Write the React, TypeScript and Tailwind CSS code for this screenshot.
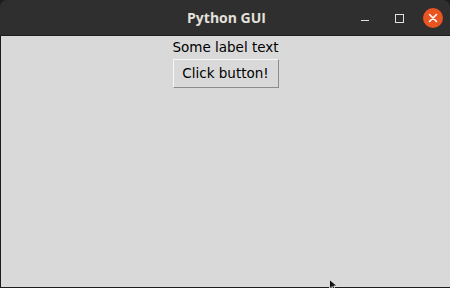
import React from "react";

export default function App() {
  return (
    <div className="w-[450px] h-[288px] flex flex-col bg-[#1c1c1c] overflow-hidden relative">
      <div className="h-[36px] shrink-0 rounded-t-[7px] bg-[#2f2f2f] flex items-center relative border-b border-[#1d1d1d]">
        <div className="flex-1 text-center text-[14px] font-bold text-[#e4e1dc] pl-[3px]" style={{ fontFamily: '"Open Sans", "DejaVu Sans", sans-serif' }}>
          Python GUI
        </div>
        <div className="absolute right-0 top-0 h-[36px] flex items-center gap-0">
          <div className="w-[34px] h-[36px] flex items-center justify-center">
            <div className="w-[8px] h-[1px] bg-[#e4e1dc] mt-[4px]" />
          </div>
          <div className="w-[34px] h-[36px] flex items-center justify-center">
            <div className="w-[9px] h-[9px] border border-[#e4e1dc]" />
          </div>
          <div className="w-[34px] h-[36px] flex items-center justify-center">
            <div className="w-[20px] h-[20px] rounded-full bg-[#e95420] flex items-center justify-center">
              <svg width="10" height="10" viewBox="0 0 10 10">
                <path d="M1.5 1.5 L8.5 8.5 M8.5 1.5 L1.5 8.5" stroke="#ffffff" strokeWidth="1.6" strokeLinecap="round" />
              </svg>
            </div>
          </div>
        </div>
      </div>
      <div className="flex-1 ml-[1px] mb-[1px] bg-[#d9d9d9] flex flex-col items-center pt-[1px]" style={{ fontFamily: '"DejaVu Sans", sans-serif' }}>
        <div className="h-[22px] flex items-center text-[13.5px] text-black leading-none">Some label text</div>
        <div className="w-[106px] h-[29px] border border-t-[#f6f6f6] border-l-[#f6f6f6] border-r-[#8c8c8c] border-b-[#8c8c8c] bg-[#d9d9d9] flex items-center justify-center text-[13.5px] text-black leading-none">
          Click button!
        </div>
      </div>
      <svg className="absolute left-[329px] top-[279px]" width="12" height="12" viewBox="0 0 12 12">
        <path d="M0.5 0.5 L0.5 10 L3 7.5 L5 11 L6.5 10.3 L4.7 7 L8 7 Z" fill="#111" stroke="#eee" strokeWidth="0.8" />
      </svg>
    </div>
  );
}
